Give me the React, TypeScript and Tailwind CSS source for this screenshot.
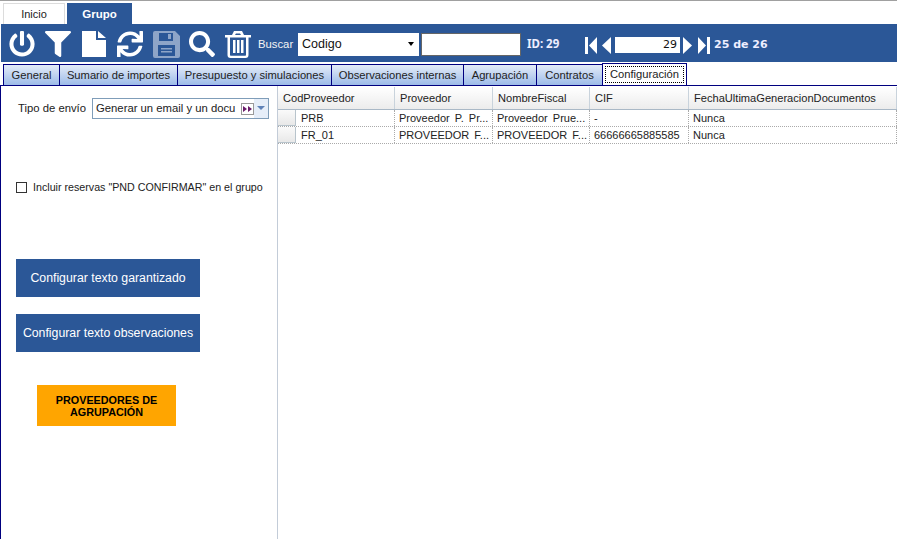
import React from 'react'
import { FaPowerOff, FaFilter, FaSync, FaSearch } from 'react-icons/fa'

const subTabs = [
  { label: 'General', w: 'w-[56px]' },
  { label: 'Sumario de importes', w: 'w-[118px]' },
  { label: 'Presupuesto y simulaciones', w: 'w-[154px]' },
  { label: 'Observaciones internas', w: 'w-[132px]' },
  { label: 'Agrupación', w: 'w-[73px]' },
  { label: 'Contratos', w: 'w-[66px]' },
]

const columns = [
  { label: 'CodProveedor', w: 'w-[117px]' },
  { label: 'Proveedor', w: 'w-[98px]' },
  { label: 'NombreFiscal', w: 'w-[97px]' },
  { label: 'CIF', w: 'w-[99px]' },
  { label: 'FechaUltimaGeneracionDocumentos', w: 'flex-1' },
]

const rows = [
  ['PRB', 'Proveedor P. Pr...', 'Proveedor Prue...', '-', 'Nunca'],
  ['FR_01', 'PROVEEDOR F...', 'PROVEEDOR F...', '66666665885585', 'Nunca'],
]

function StepIcon({ dir }: { dir: 'first' | 'prev' | 'next' | 'last' }) {
  const paths = {
    first: 'M0 0h3v17H0z M12 0v17L4 8.5z',
    prev: 'M11 0v17L2 8.5z',
    next: 'M1 0v17l9-8.5z',
    last: 'M1 0v17l8-8.5z M10 0h3v17h-3z',
  }
  return (
    <svg width="13" height="17" viewBox="0 0 13 17" className="shrink-0">
      <path d={paths[dir]} fill="#fff" />
    </svg>
  )
}

function ToolIcon({ children }: { children: React.ReactNode }) {
  return <div className="w-[36px] h-[28px] shrink-0 flex items-center justify-center">{children}</div>
}

export default function App() {
  return (
    <div className="w-[897px] h-[539px] overflow-hidden bg-white flex flex-col text-[11.2px] text-[#222] font-['Liberation_Sans',sans-serif]">
      <div className="h-px bg-[#a0a0a0]" />
      {/* top tabs */}
      <div className="h-[23px] flex items-end pl-[3px] gap-[2px] bg-white">
        <div className="w-[62px] h-[21px] pt-[1px] border border-b-0 border-[#dcdcdc] flex items-center justify-center text-[11px]">Inicio</div>
        <div className="w-[65px] h-[21px] pt-[2px] bg-[#2b5797] text-white font-bold text-[11.5px] flex items-center justify-center">Grupo</div>
      </div>
      {/* toolbar */}
      <div className="h-[38px] ml-px bg-[#2b5797] flex items-center text-white pt-[2px]">
        <div className="w-[257px] shrink-0 flex items-center pl-[3px]">
          <ToolIcon><FaPowerOff size={26} /></ToolIcon>
          <ToolIcon><FaFilter size={26} /></ToolIcon>
          <ToolIcon>
            <svg width="24" height="26" viewBox="0 0 24 26"><path d="M0 0h14v9h10v17H0z M16 0l8 7h-8z" fill="#fff" /></svg>
          </ToolIcon>
          <ToolIcon><FaSync size={26} /></ToolIcon>
          <ToolIcon>
            <svg width="27" height="27" viewBox="0 0 27 27">
              <path fillRule="evenodd" fill="#8ea5c8" d="M2 0h20l5 5v20a2 2 0 0 1-2 2H2a2 2 0 0 1-2-2V2a2 2 0 0 1 2-2z M6 2v8h14V2z M15 3h3v5h-3z M5 14v11h17V14z" />
              <path fill="#8ea5c8" d="M8 17h11v1.5H8z M8 20h11v1.5H8z" />
            </svg>
          </ToolIcon>
          <ToolIcon><FaSearch size={26} /></ToolIcon>
          <ToolIcon>
            <svg width="26" height="27" viewBox="0 0 26 27" fill="#fff">
              <path fillRule="evenodd" d="M9 0h8l2 4h7v2.5h-2.5V24a3 3 0 0 1-3 3h-15a3 3 0 0 1-3-3V6.500H0V4h7z M10 4h6l-1-1.500h-4z M5 6.500V24a.8.8 0 0 0 .8.8h14.400a.8.8 0 0 0 .8-.8V6.500z" />
              <path d="M8 9h2.500v13H8z M12 9h2.500v13H12z M16 9h2.500v13H16z" />
            </svg>
          </ToolIcon>
        </div>
        <span className="w-[40px] shrink-0 text-[11.3px] text-[#f4f4f4]">Buscar</span>
        <div className="w-[121px] h-[23px] shrink-0 bg-white text-[#111] text-[12.5px] flex items-center justify-between pl-[4px] pr-[3px]">
          <span>Codigo</span>
          <span className="w-0 h-0 border-x-[3px] border-x-transparent border-t-[4px] border-t-black mr-[2px]" />
        </div>
        <div className="w-[100px] h-[23px] shrink-0 ml-[2px] bg-white border border-[#666]" />
        <span className="ml-[6px] w-[51px] shrink-0 font-bold text-[11.5px] font-['Noto_Sans',sans-serif] text-[#eef]">ID: 29</span>
        <div className="ml-[7px] flex items-center gap-[2px] mt-[2px]">
          <StepIcon dir="first" />
          <StepIcon dir="prev" />
          <div className="w-[65px] h-[16px] bg-white text-[#111] text-right pr-[3px] leading-[16px] font-['DejaVu_Sans',sans-serif] text-[11px]">29</div>
          <StepIcon dir="next" />
          <StepIcon dir="last" />
          <span className="ml-[2px] font-bold text-[11px] font-['DejaVu_Sans',sans-serif] text-[#eef]">25 de 26</span>
        </div>
      </div>
      {/* sub tabs */}
      <div className="h-[24px] flex items-end pl-[3px] border-b border-[#00007f] shrink-0">
        {subTabs.map((t) => (
          <div
            key={t.label}
            className={`${t.w} h-[21px] pt-[1px] shrink-0 flex items-center justify-center border border-r-0 border-b-0 border-[#00007f] bg-gradient-to-b from-[#e4ecf8] to-[#9dbbe8] text-[#222]`}
          >
            {t.label}
          </div>
        ))}
        <div className="w-[85px] h-[22px] shrink-0 border border-b-0 border-[#00007f] bg-white p-[2px]">
          <div className="h-full border border-dotted border-black flex items-center justify-center">Configuración</div>
        </div>
      </div>
      {/* body */}
      <div className="flex-1 flex min-h-0 border-l border-[#00007f]">
        <div className="w-[277px] shrink-0 border-r border-[#c3ccd8] flex flex-col">
          <div className="flex items-center mt-[11px] pl-[17px] h-[22px] text-[11.3px]">
            <span className="w-[74px]">Tipo de envío</span>
            <div className="w-[177px] h-[21px] border border-[#7f9db9] flex items-center pl-[3px] relative">
              <span>Generar un email y un docu</span>
              <span className="absolute right-[14px] top-[4px] w-[13px] h-[12px] border border-[#999] bg-white flex items-center justify-center">
                <svg width="9" height="6" viewBox="0 0 9 6"><path d="M0 0v6l4-3zM5 0v6l4-3z" fill="#6a1b6a" /></svg>
              </span>
              <span className="absolute right-0 top-0 bottom-0 w-[14px] bg-[#e6eef9] flex items-center justify-center">
                <span className="w-0 h-0 border-x-[4px] border-x-transparent border-t-[4px] border-t-[#5f82b8]" />
              </span>
            </div>
          </div>
          <div className="flex items-center mt-[60px] pl-[15px] gap-[6px] text-[10.7px]">
            <span className="w-[11px] h-[11px] border border-[#333] bg-white shrink-0" />
            <span className="whitespace-nowrap">Incluir reservas "PND CONFIRMAR" en el grupo</span>
          </div>
          <div className="mt-[64px] ml-[15px] w-[184px] h-[38px] bg-[#2b5797] text-white text-[12.3px] flex items-center justify-center">Configurar texto garantizado</div>
          <div className="mt-[17px] ml-[15px] w-[184px] h-[38px] bg-[#2b5797] text-white text-[12.3px] flex items-center justify-center">Configurar texto observaciones</div>
          <div className="mt-[33px] ml-[36px] w-[139px] h-[41px] bg-[#ffa500] text-black font-bold text-[10.800px] leading-[12px] text-center flex items-center justify-center px-[10px]">PROVEEDORES DE AGRUPACIÓN</div>
        </div>
        {/* grid */}
        <div className="flex-1 min-w-0 pt-[1px] text-[11px]">
          <div className="flex h-[23px] border-b border-[#a9b8c6]">
            {columns.map((c) => (
              <div key={c.label} className={`${c.w} shrink-0 flex items-center pl-[5px] pt-[1px] border-r border-[#c9d3dc] bg-gradient-to-b from-white to-[#ececec] text-[11.1px]`}>
                {c.label}
              </div>
            ))}
          </div>
          {rows.map((r) => (
            <div key={r[0]} className="flex h-[17px] border-b border-dotted border-[#aaa]">
              <div className="w-[18px] shrink-0 bg-gradient-to-b from-[#fafafa] to-[#e8e8e8] border-b border-r border-[#b8c4cc]" />
              {r.map((cell, i) => (
                <div key={i} className={`${i === 0 ? 'w-[99px] pl-[5px]' : `${columns[i].w} pl-[4px]`} shrink-0 flex items-center border-r border-dotted border-[#aaa] whitespace-nowrap overflow-hidden [word-spacing:2px]`}>
                  {cell}
                </div>
              ))}
            </div>
          ))}
        </div>
      </div>
    </div>
  )
}
